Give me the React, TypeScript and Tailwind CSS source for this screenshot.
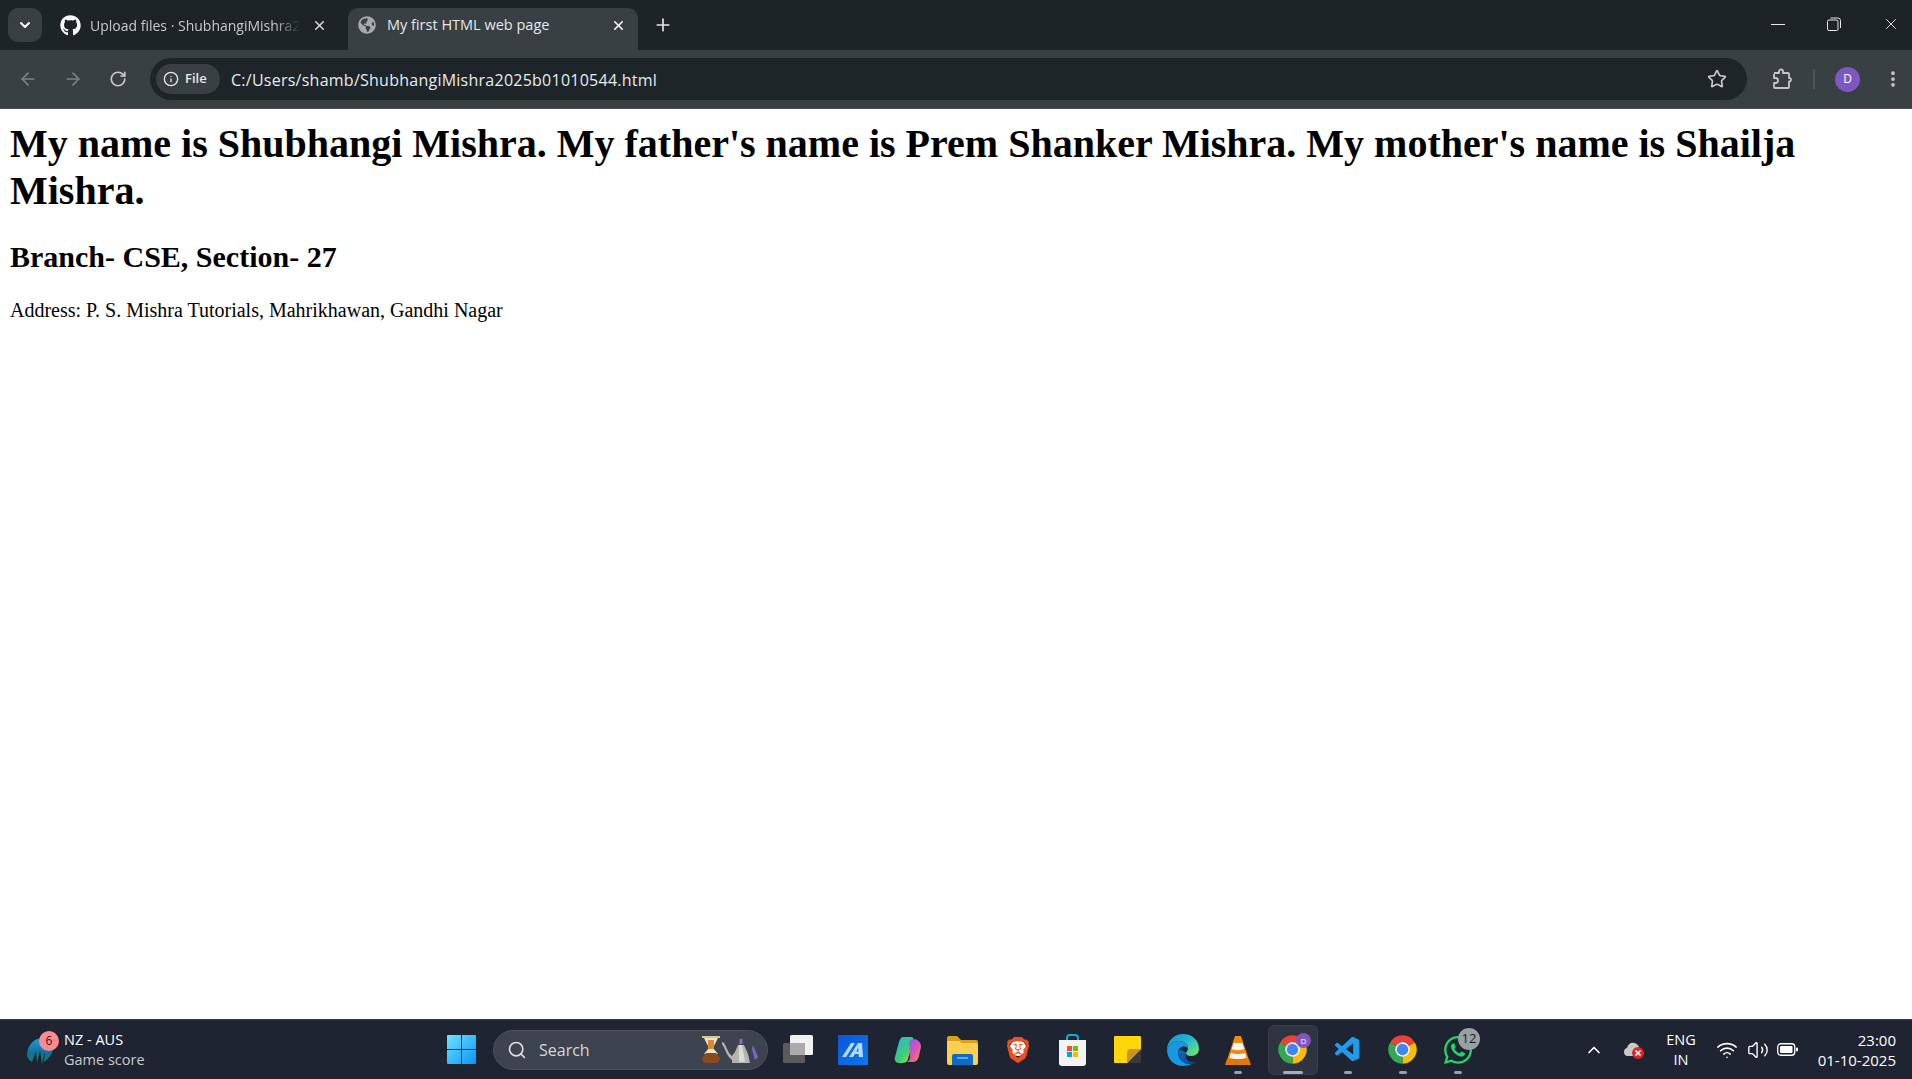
import React from 'react';
import { ArrowLeft, ArrowRight, ChevronDown, ChevronUp, EllipsisVertical, Info, Plus, RotateCw, Search, Star, Volume2, Wifi, X } from 'lucide-react';
import { FaGithub, FaGlobeAmericas, FaWhatsapp } from 'react-icons/fa';
import { SiBrave } from 'react-icons/si';
import { VscVscode } from 'react-icons/vsc';

const UI_FONT = 'font-["Open_Sans",sans-serif]';

const ChromeIcon = ({ className }: { className?: string }) => (
  <svg viewBox="0 0 24 24" className={className}>
    <path d="M12 12L2.47 6.5A11 11 0 0 1 21.53 6.5Z" fill="#ea4335" />
    <path d="M12 12L21.53 6.5A11 11 0 0 1 12 23Z" fill="#fbbc04" />
    <path d="M12 12L12 23A11 11 0 0 1 2.47 6.5Z" fill="#34a853" />
    <circle cx="12" cy="12" r="5.6" fill="#fff" />
    <circle cx="12" cy="12" r="4.5" fill="#4285f4" />
  </svg>
);

const WindowsLogo = () => (
  <svg viewBox="0 0 29 29" className="w-[29px] h-[29px]">
    <defs>
      <linearGradient id="win" x1="0" y1="0" x2="1" y2="1">
        <stop offset="0" stopColor="#6fe3ff" />
        <stop offset="1" stopColor="#0a94f5" />
      </linearGradient>
    </defs>
    <path d="M1 0h13v14H0V1a1 1 0 0 1 1-1ZM15 0h13a1 1 0 0 1 1 1v13H15ZM0 15h14v14H1a1 1 0 0 1-1-1ZM15 15h14v13a1 1 0 0 1-1 1H15Z" fill="url(#win)" />
  </svg>
);

const CricketLogo = () => (
  <svg viewBox="0 0 26 28" className="w-[26px] h-[28px]">
    <defs>
      <linearGradient id="icc" x1="0" y1="0" x2="0" y2="1">
        <stop offset="0" stopColor="#1f9bd8" />
        <stop offset="0.6" stopColor="#136f9a" />
        <stop offset="1" stopColor="#0f8a5c" />
      </linearGradient>
    </defs>
    <path d="M0 20C0 10 6 3 14 2c7 0 12 4 12 10 0 6-5 11-9 14l1-12-3 14-2-14-3 13-1-12-4 11C3 24 1 23 0 20Z" fill="url(#icc)" />
  </svg>
);

const TaskViewIcon = () => (
  <svg viewBox="0 0 30 30" className="w-[30px] h-[30px]">
    <rect x="0" y="8" width="22" height="20" rx="1.5" fill="#5b5b5e" />
    <rect x="7" y="0" width="23" height="20" rx="1.5" fill="#f1f1f1" />
    <rect x="7" y="8" width="15" height="12" fill="#aaaaaa" />
  </svg>
);

const MaIcon = () => (
  <svg viewBox="0 0 30 30" className="w-[30px] h-[30px]">
    <defs>
      <linearGradient id="ma" x1="0" y1="0" x2="1" y2="1">
        <stop offset="0" stopColor="#0b57d8" />
        <stop offset="1" stopColor="#0a78ea" />
      </linearGradient>
    </defs>
    <rect width="30" height="30" fill="url(#ma)" />
    <path d="M4 22L13 8h4L8 22ZM11 22L20 8h4l1 14h-4l-.5-3h-3.500l-2 3Z" fill="#b7d9fb" />
    <path d="M18.500 16.500h2l-.4-4Z" fill="#0b62dc" />
  </svg>
);

const CopilotIcon = () => (
  <svg viewBox="0 0 28 28" className="w-7 h-7">
    <defs>
      <linearGradient id="cpA" x1="0" y1="0" x2="1" y2="1">
        <stop offset="0" stopColor="#23b5e8" />
        <stop offset="0.6" stopColor="#3ecf6e" />
        <stop offset="1" stopColor="#f3d23a" />
      </linearGradient>
      <linearGradient id="cpB" x1="0" y1="0" x2="1" y2="1">
        <stop offset="0" stopColor="#5a6cf0" />
        <stop offset="0.5" stopColor="#d64fc4" />
        <stop offset="1" stopColor="#f58a3c" />
      </linearGradient>
    </defs>
    <path d="M9 1h8c2 0 3 1 2 4l-5 18c-1 3-3 4-6 4H5c-3 0-5-3-4-6L5 6c1-3 2-5 4-5Z" fill="url(#cpA)" />
    <path d="M15 6c1-2 2-3 4-3 5 0 8 3 8 8l-2 9c-1 4-3 6-7 6h-7c3 0 4-1 5-4Z" fill="url(#cpB)" />
  </svg>
);

const FolderIcon = () => (
  <svg viewBox="0 0 31 30" className="w-[31px] h-[30px]">
    <path d="M0 3a2 2 0 0 1 2-2h8l4 4h15a2 2 0 0 1 2 2v3H0Z" fill="#d8a21c" />
    <path d="M0 6h12l3 2h14a2 2 0 0 1 2 2v18a2 2 0 0 1-2 2H2a2 2 0 0 1-2-2Z" fill="#fbd04e" />
    <path d="M5 30v-9a2 2 0 0 1 2-2h17a2 2 0 0 1 2 2v9Z" fill="#0f6cc4" />
    <rect x="10" y="22" width="11" height="2" fill="#58a9ee" />
  </svg>
);

const BraveIcon = () => (
  <div className="relative w-[26px] h-[30px] flex items-center justify-center">
    <div className="absolute left-[5px] top-[5px] w-4 h-4 rounded-full bg-white" />
    <SiBrave className="relative w-[26px] h-[30px] text-[#f0501f]" />
  </div>
);

const StoreIcon = () => (
  <svg viewBox="0 0 29 32" className="w-[29px] h-8">
    <path d="M9 7V4a3 3 0 0 1 3-3h5a3 3 0 0 1 3 3v3" fill="none" stroke="#17a7d8" strokeWidth="2" />
    <path d="M1 6h27v23a3 3 0 0 1-3 3H4a3 3 0 0 1-3-3Z" fill="#f3f3f3" />
    <rect x="9" y="12" width="5" height="5" fill="#f25022" />
    <rect x="15" y="12" width="5" height="5" fill="#7fba00" />
    <rect x="9" y="18" width="5" height="5" fill="#00a4ef" />
    <rect x="15" y="18" width="5" height="5" fill="#ffb900" />
  </svg>
);

const NotesIcon = () => (
  <svg viewBox="0 0 27 27" className="w-[27px] h-[27px]">
    <path d="M1 0h25a1 1 0 0 1 1 1v14L15 27H1a1 1 0 0 1-1-1V1a1 1 0 0 1 1-1Z" fill="#ffd60a" />
    <path d="M27 13v13a1 1 0 0 1-1 1H13Z" fill="#3a3a3a" />
    <path d="M27 13H17a4 4 0 0 0-4 4v10Z" fill="#c7941c" />
  </svg>
);

const EdgeIcon = () => (
  <svg viewBox="0 0 32 32" className="w-8 h-8">
    <defs>
      <linearGradient id="edgeA" x1="0" y1="0" x2="1" y2="0.8">
        <stop offset="0" stopColor="#1491d8" />
        <stop offset="0.55" stopColor="#25b7cf" />
        <stop offset="1" stopColor="#6ee26f" />
      </linearGradient>
      <linearGradient id="edgeB" x1="0" y1="0" x2="1" y2="1">
        <stop offset="0" stopColor="#0c6cc0" />
        <stop offset="1" stopColor="#10438f" />
      </linearGradient>
    </defs>
    <path d="M16 0c9 0 16 6 16 15 0 4-3 7-8 7-3 0-5-1-5-3 0-1 2-2 2-5 0-4-4-7-9-7C6 7 1 11 0 16 0 7 7 0 16 0Z" fill="url(#edgeA)" />
    <path d="M0 16c1-5 6-9 12-9 5 0 9 3 9 7-3-3-10-2-10 5 0 6 6 12 14 11-3 1-6 2-9 2C7 32 0 25 0 16Z" fill="#1798e0" />
    <path d="M11 19c0 6 6 12 14 11 1 0 2-1 3-2-6 1-11-3-9-9-2-3-8-5-8 0Z" fill="url(#edgeB)" />
  </svg>
);

const VlcIcon = () => (
  <svg viewBox="0 0 26 30" className="w-[26px] h-[30px]">
    <path d="M10 1h6l8 24H2Z" fill="#f08a12" />
    <path d="M8.7 8h8.6l2 6c-3 1.5-9.600 1.500-12.600 0Z" fill="#f5f5f5" />
    <path d="M6 18c4 1.500 10 1.500 14 0l1.400 4.500c-4 2-12.800 2-16.800 0Z" fill="#f5f5f5" />
    <path d="M2 24h22l2 6H0Z" fill="#e2760a" />
  </svg>
);

const ActiveChrome = () => (
  <div className="relative w-[31px] h-[31px]">
    <ChromeIcon className="w-[31px] h-[31px]" />
    <div className="absolute -top-px -right-[3px] w-[15px] h-[15px] rounded-full bg-[#7e57c2] flex items-center justify-center text-[8px] leading-none text-white">D</div>
  </div>
);

const VpnCloud = () => (
  <svg viewBox="0 0 21 21" className="w-[21px] h-[21px]">
    <path d="M1 13a4 4 0 0 1 3-4c1-4 4-6 7-5 2 0 4 2 5 4l-4 9H5a4 4 0 0 1-4-4Z" fill="#c9c9c9" />
    <circle cx="15" cy="14" r="6" fill="#e3242b" />
    <path d="M12.500 11.500l5 5M17.500 11.500l-5 5" stroke="#fff" strokeWidth="1.600" />
  </svg>
);

const PuzzleIcon = () => (
  <svg viewBox="0 0 22 22" className="w-[22px] h-[22px]" fill="none" stroke="#c4c7c5" strokeWidth="1.800" strokeLinejoin="round">
    <path d="M3 5h5V3.500a2 2 0 0 1 4 0V5h5a1 1 0 0 1 1 1v4h1a2 2 0 0 1 0 3.500h-1V19a1 1 0 0 1-1 1H4a1 1 0 0 1-1-1v-4h1.500a2.500 2.500 0 0 0 0-5H3V6" />
  </svg>
);

const BatteryIcon = () => (
  <svg viewBox="0 0 21 13" className="w-[21px] h-[13px]">
    <rect x="0.750" y="0.750" width="17" height="11.500" rx="3" fill="none" stroke="#fff" strokeWidth="1.300" />
    <rect x="3" y="3" width="12.500" height="7" rx="1" fill="#fff" />
    <rect x="19" y="4.500" width="2" height="4" rx="1" fill="#fff" />
  </svg>
);

const RestoreIcon = () => (
  <svg viewBox="0 0 14 14" className="w-[14px] h-[14px]" fill="none" stroke="#e8e8e8" strokeWidth="1">
    <rect x="0.500" y="3" width="10.500" height="10.500" rx="1.500" />
    <path d="M3.500 1h7.500a2.500 2.500 0 0 1 2.500 2.500V11" />
  </svg>
);

// search highlight: pour-over carafe and kettle
const SearchArt = () => (
  <div className="ml-auto flex items-end gap-[1px]">
    <svg viewBox="0 0 20 27" className="w-[20px] h-[27px]">
      <rect x="1" y="0" width="18" height="2" fill="#d8c49a" />
      <path d="M3 2h14l-5 10 5 6H3l5-6Z" fill="#efe3c8" />
      <rect x="7" y="4" width="6" height="9" fill="#d98a2c" />
      <path d="M5 17h10l4 5c0 3-2 5-5 5H6c-3 0-5-2-5-5Z" fill="#8b4a22" />
    </svg>
    <svg viewBox="0 0 37 24" className="w-[37px] h-[24px]">
      <path d="M0 3c4 0 5 11 10 14l3-4 3-7h6l4 9 2 9H10v-3c-5-3-7-12-10-16Z" fill="#b5b5b0" />
      <path d="M17 6h3l3 17h-6Z" fill="#dcdcd6" />
      <rect x="17.500" y="0" width="3" height="5" fill="#8e6bc8" />
      <path d="M31 6l5 12-3 3-3-11Z" fill="#7c66c4" />
    </svg>
  </div>
);

const dockIcons: { icon: React.ReactNode; dot?: boolean; active?: boolean; badge?: string }[] = [
  { icon: <TaskViewIcon /> },
  { icon: <MaIcon /> },
  { icon: <CopilotIcon /> },
  { icon: <FolderIcon /> },
  { icon: <BraveIcon /> },
  { icon: <StoreIcon /> },
  { icon: <NotesIcon /> },
  { icon: <EdgeIcon /> },
  { icon: <VlcIcon />, dot: true },
  { icon: <ActiveChrome />, active: true },
  { icon: <VscVscode className="w-[30px] h-[30px] text-[#1f9cf0]" />, dot: true },
  { icon: <ChromeIcon className="w-[31px] h-[31px]" />, dot: true },
  { icon: <FaWhatsapp className="w-[32px] h-[32px] text-[#25d366]" />, dot: true, badge: '12' },
];

const TabBar = () => (
  <div className="h-[50px] bg-[#1c2428] flex items-stretch pl-2">
    <div className="mt-2 w-[34px] h-[34px] rounded-[10px] bg-[#384044] flex items-center justify-center">
      <ChevronDown className="w-4 h-4 text-white" strokeWidth={3} />
    </div>
    <div className="ml-[18px] w-[288px] flex items-center">
      <FaGithub className="w-[21px] h-[21px] text-white shrink-0" />
      <span className="ml-[9px] w-[210px] overflow-hidden whitespace-nowrap text-[14px] text-[#c7cacb] [mask-image:linear-gradient(to_right,black_88%,transparent)]">Upload files · ShubhangiMishra2</span>
      <X className="ml-[12px] w-[15px] h-[15px] text-[#d5d7d8] shrink-0" strokeWidth={2.5} />
    </div>
    <div className="mt-2 w-[290px] h-[42px] rounded-t-[10px] bg-[#384044] flex items-center px-[10px] pb-2">
      <FaGlobeAmericas className="w-[18px] h-[18px] text-[#a5abae] shrink-0" />
      <span className="ml-[11px] flex-1 whitespace-nowrap text-[14.500px] text-[#e6e8e9]">My first HTML web page</span>
      <X className="mr-[2px] w-[15px] h-[15px] text-white shrink-0" strokeWidth={2.5} />
    </div>
    <div className="ml-[15px] flex items-center">
      <Plus className="w-5 h-5 text-[#e4e6e7]" strokeWidth={2} />
    </div>
    <div className="ml-auto flex items-center pb-[2px] pr-[12px]">
      <div className="w-[14px] h-px bg-[#e8e8e8]" />
      <div className="ml-[42px]"><RestoreIcon /></div>
      <X className="ml-[41px] w-[18px] h-[18px] text-[#e8e8e8]" strokeWidth={1.250} />
    </div>
  </div>
);

const Toolbar = () => (
  <div className="h-[59px] bg-[#384044] border-b border-[#4b5255] flex items-center pl-[18px]">
    <ArrowLeft className="w-[20px] h-[20px] text-[#7c8285]" />
    <ArrowRight className="ml-[25px] w-[20px] h-[20px] text-[#7c8285]" />
    <RotateCw className="ml-[26px] w-[18px] h-[18px] text-[#c7cacb]" strokeWidth={2.25} />
    <div className="ml-[23px] w-[1597px] h-[42px] rounded-full bg-[#1d2529] flex items-center pl-[6px] pr-[20px]">
      <div className="w-16 h-[30px] rounded-full bg-[#384044] flex items-center pl-[7px] gap-[6px]">
        <Info className="w-[16px] h-[16px] text-[#e6e8e9]" />
        <span className="text-[13px] font-semibold text-[#e6e8e9]">File</span>
      </div>
      <span className="ml-[11px] pt-px text-[16px] text-[#e9ebec] tracking-[0.25px]">C:/Users/shamb/ShubhangiMishra2025b01010544.html</span>
      <Star className="ml-auto w-[20px] h-[20px] text-[#c7cacb]" strokeWidth={2} />
    </div>
    <div className="ml-[24px]"><PuzzleIcon /></div>
    <div className="ml-[20px] w-[2px] h-5 bg-[#4d5558]" />
    <div className="ml-5 w-[25px] h-[25px] rounded-full bg-[#7e57c2] flex items-center justify-center text-[12px] text-white">D</div>
    <EllipsisVertical className="ml-[23px] w-[20px] h-[20px] text-[#c7cacb]" strokeWidth={2.5} />
  </div>
);

const PageContent = () => (
  <div className="flex-1 bg-white text-black font-['Liberation_Serif',serif] px-[10px] overflow-hidden">
    <h1 className="mt-[11px] text-[40px] leading-[47px] font-bold">
      My name is Shubhangi Mishra. My father's name is Prem Shanker Mishra. My mother's name is Shailja Mishra.
    </h1>
    <h2 className="mt-[26px] text-[30px] leading-[34px] font-bold">Branch- CSE, Section- 27</h2>
    <p className="mt-[25px] text-[20px] leading-[23px]">Address: P. S. Mishra Tutorials, Mahrikhawan, Gandhi Nagar</p>
  </div>
);

const Taskbar = () => (
  <div className="relative h-[60px] bg-[#1f2432] border-t border-[#3d424c] flex items-center text-white">
    <div className="ml-[27px] w-[420px] flex items-center">
      <div className="relative w-[26px] h-[28px]">
        <CricketLogo />
        <div className="absolute -top-[5px] left-[12px] w-5 h-5 rounded-full bg-[#ff8a8f] text-[#1c1c1c] text-[12px] flex items-center justify-center">6</div>
      </div>
      <div className="ml-[11px] text-[14.500px] leading-[20px]">
        <div>NZ - AUS</div>
        <div className="text-[#c8cacd]">Game score</div>
      </div>
    </div>
    <WindowsLogo />
    <div className="ml-[17px] w-[275px] h-10 rounded-full bg-[#3e4350] border border-[#4b505c] flex items-center pl-[13px] pr-2">
      <Search className="w-[20px] h-[20px] text-[#dcdde0]" />
      <span className="ml-3 text-[16px] text-[#d6d7da]">Search</span>
      <SearchArt />
    </div>
    <div className="ml-[2px] flex">
      {dockIcons.map((item, i) => (
        <div key={i} className="relative w-[55px] h-[50px] flex items-center justify-center">
          {item.active && <div className="absolute left-[3px] top-0 w-[50px] h-[50px] rounded-md bg-[#2f3441] border border-[#383d49]" />}
          <div className="relative">{item.icon}</div>
          {item.badge && <div className="absolute top-[3px] left-[28px] w-[22px] h-[22px] rounded-full bg-[#9aa0a6] text-[#1c1c1c] text-[13px] flex items-center justify-center">{item.badge}</div>}
          {item.dot && <div className="absolute bottom-[1px] left-[24px] w-2 h-[3px] rounded-full bg-[#9a9ea6]" />}
          {item.active && <div className="absolute bottom-[1px] left-[18px] w-5 h-[3px] rounded-full bg-[#a9adb5]" />}
        </div>
      ))}
    </div>
    <div className="ml-auto flex items-center pr-4">
      <ChevronUp className="w-[20px] h-[20px]" strokeWidth={2} />
      <div className="ml-[19px]"><VpnCloud /></div>
      <div className="ml-[22px] text-center text-[14.500px] leading-[20px]">
        <div>ENG</div>
        <div>IN</div>
      </div>
      <Wifi className="ml-5 w-[22px] h-[22px]" strokeWidth={1.750} />
      <Volume2 className="ml-[9px] w-[22px] h-[22px]" strokeWidth={1.500} />
      <div className="ml-2"><BatteryIcon /></div>
      <div className="ml-5 text-right text-[15px] leading-[20px]">
        <div>23:00</div>
        <div>01-10-2025</div>
      </div>
    </div>
  </div>
);

export default function App() {
  return (
    <div className={`h-[1079px] w-[1912px] overflow-hidden flex flex-col ${UI_FONT}`}>
      <TabBar />
      <Toolbar />
      <PageContent />
      <Taskbar />
    </div>
  );
}
